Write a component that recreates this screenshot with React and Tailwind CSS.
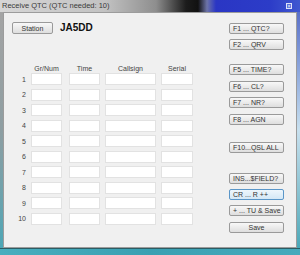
import React from 'react';

const ROWS = [1, 2, 3, 4, 5, 6, 7, 8, 9, 10];

const KEYS = [
  { label: 'F1 ... QTC?', mt: 'mt-[10px]' },
  { label: 'F2 ... QRV', mt: 'mt-[5px]' },
  { label: 'F5 ... TIME?', mt: 'mt-[14px]' },
  { label: 'F6 ... CL?', mt: 'mt-[6px]' },
  { label: 'F7 ... NR?', mt: 'mt-[5px]' },
  { label: 'F8 ... AGN', mt: 'mt-[6px]' },
  { label: 'F10...QSL ALL', mt: 'mt-[17px]' },
  { label: 'INS...$FIELD?', mt: 'mt-[20px]' },
  { label: 'CR ... R ++', mt: 'mt-[5px]', focus: true },
  { label: '+ ... TU & Save', mt: 'mt-[5px]' },
  { label: 'Save', mt: 'mt-[6px]', center: true },
];

function WinButton({ label, className = '', focus, center }) {
  return (
    <div
      className={`h-[11px] rounded-[2px] border flex items-center text-[7px] leading-none text-[#333] ${
        center ? 'justify-center' : 'pl-[3px]'
      } ${
        focus
          ? 'border-[#5a96c8] bg-gradient-to-b from-[#eef6fc] to-[#d4e8f6]'
          : 'border-[#9a9a9a] bg-gradient-to-b from-[#f8f8f8] to-[#dedede]'
      } ${className}`}
    >
      {label}
    </div>
  );
}

function Cell({ w, ml }) {
  return <div className={`h-[12px] ${w} ${ml} bg-white border border-[#e2e2e2]`} />;
}

export default function App() {
  return (
    <div
      className="w-[300px] h-[255px] flex flex-col overflow-hidden bg-[#9aa0a4]"
      style={{ fontFamily: '"Liberation Sans", Arial, sans-serif' }}
    >
      {/* title bar */}
      <div className="h-[12px] flex items-center bg-[linear-gradient(90deg,#d6d6d6_0%,#c2c2c2_35%,#8e8e8e_52%,#1c1c1c_62%,#111_66%,#6d74a8_69%,#2a36c4_72%,#2c3cc8_90%,#4058d0_100%)]">
        <span className="ml-[2px] text-[7.5px] leading-none text-[#3a3a3a]">Receive QTC (QTC needed: 10)</span>
        <div className="ml-auto mr-[8px] w-[6px] h-[6px] border border-white/80 bg-[#5a70d8] flex items-center justify-center text-[5px] leading-none text-white">
          ×
        </div>
      </div>

      <div className="flex-1 flex">
        <div className="w-[3px] bg-gradient-to-b from-[#a4a4a4] via-[#8e9ea2] to-[#4aa6b6]" />
        {/* client area */}
        <div className="w-[294px] bg-[#f0f0f0] border border-[#9c9c9c] flex">
          <div className="w-[225px] flex flex-col">
            <div className="flex items-center mt-[9px] ml-[8px] h-[12px]">
              <WinButton label="Station" center className="w-[41px] h-[12px]" />
              <span className="ml-[7px] text-[10px] font-bold leading-none text-[#111]">JA5DD</span>
            </div>

            <div className="flex mt-[30px] h-[8px] items-center text-[7px] leading-none text-[#444]">
              <div className="w-[27px]" />
              <div className="w-[31px] text-center">Gr/Num</div>
              <div className="w-[31px] ml-[7px] text-center">Time</div>
              <div className="w-[51px] ml-[5px] text-center">Callsign</div>
              <div className="w-[32px] ml-[5px] text-center">Serial</div>
            </div>

            <div className="flex flex-col gap-[3.5px] mt-[1px]">
              {ROWS.map((n) => (
                <div key={n} className="flex items-center">
                  <div className="w-[22px] text-right text-[7px] leading-none text-[#444]">{n}</div>
                  <Cell w="w-[31px]" ml="ml-[5px]" />
                  <Cell w="w-[31px]" ml="ml-[7px]" />
                  <Cell w="w-[51px]" ml="ml-[5px]" />
                  <Cell w="w-[32px]" ml="ml-[5px]" />
                </div>
              ))}
            </div>
          </div>

          <div className="w-[55px] flex flex-col">
            {KEYS.map((k) => (
              <WinButton key={k.label} label={k.label} focus={k.focus} center={k.center} className={k.mt} />
            ))}
          </div>
        </div>
        <div className="w-[3px] bg-gradient-to-b from-[#5a70c8] via-[#c8e0ee] to-[#48a8b8]" />
      </div>

      <div className="h-[7px] border-t border-[#2c5c64] bg-gradient-to-r from-[#48aebe] via-[#3aa0b2] to-[#46aabc]" />
    </div>
  );
}
